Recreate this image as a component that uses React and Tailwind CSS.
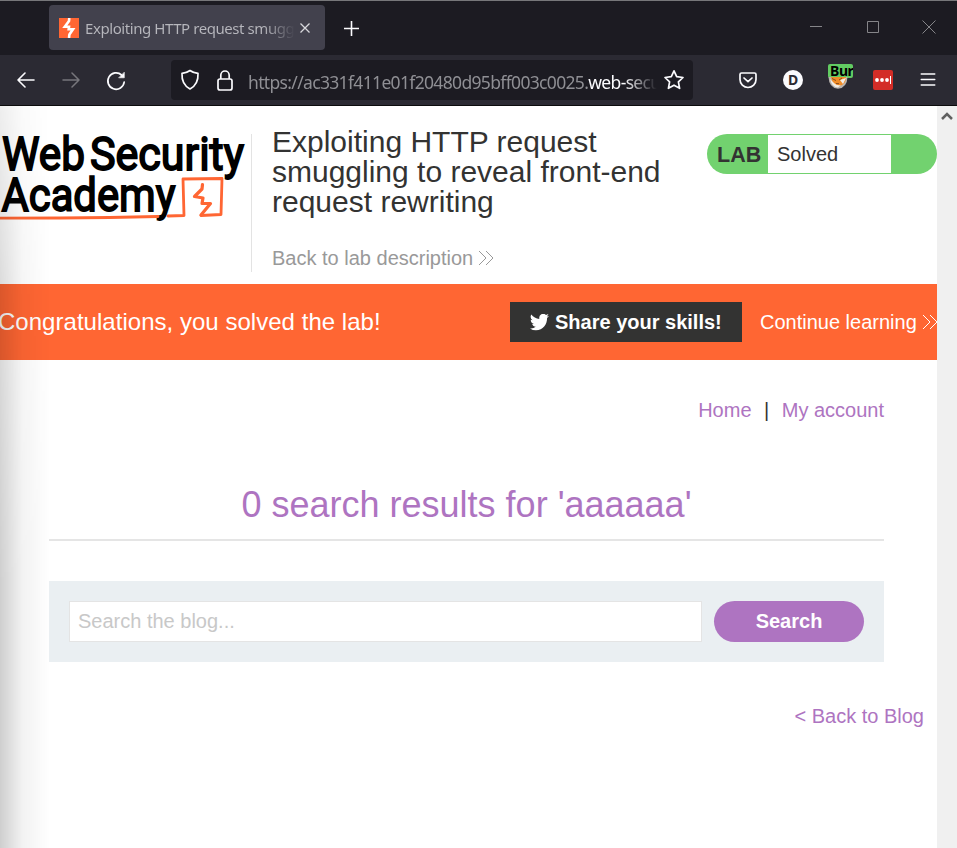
import React from "react";

function Chevrons({ className }) {
  return (
    <svg className={className} width="16" height="16" viewBox="0 0 16 16" fill="none" stroke="currentColor" strokeWidth="1">
      <path d="M1 1l7 7-7 7M8 1l7 7-7 7" />
    </svg>
  );
}

function TabStrip() {
  return (
    <div className="flex h-[55px] shrink-0 items-center border-t border-[#77777a] bg-[#1c1b22] pb-px pl-[49px]">
      <div className="flex h-[45px] w-[276px] items-center rounded bg-[#42414d] pl-[10px]">
        <svg className="shrink-0" width="20" height="20" viewBox="0 0 20 20">
          <rect width="20" height="20" fill="#ff6633" />
          <path d="M10.300 0L10 3L5.800 8.700H10L9.700 11.200H14L10.400 16.500L10 20" fill="none" stroke="#fff" strokeWidth="2.600" />
        </svg>
        <div className="ml-[6px] w-[210px] overflow-hidden whitespace-nowrap bg-linear-to-r from-[#b7b7bd] from-85% to-transparent bg-clip-text pt-[2px] text-[15px] tracking-[-0.43px] text-transparent">
          Exploiting HTTP request smuggling
        </div>
        <svg className="ml-[5px] shrink-0" width="10" height="10" viewBox="0 0 10 10" stroke="#d8d8dc" strokeWidth="1.300">
          <path d="M.5 .5l9 9M9.500 .5l-9 9" />
        </svg>
      </div>
      <svg className="mt-px ml-[19px]" width="15" height="15" viewBox="0 0 15 15" stroke="#fbfbfe" strokeWidth="1.600">
        <path d="M7.500 0v15M0 7.500h15" />
      </svg>
      <div className="ml-auto flex items-center pr-[21px] pb-px">
        <svg width="12" height="14" viewBox="0 0 12 14" stroke="#858589"><path d="M0 6.500h12" /></svg>
        <svg className="ml-[45px]" width="12" height="12" viewBox="0 0 12 12" fill="none" stroke="#858589"><path d="M.5 .5h11v11h-11z" /></svg>
        <svg className="ml-[43px]" width="14" height="14" viewBox="0 0 14 14" stroke="#858589"><path d="M.5 .5l13 13M13.500 .5l-13 13" /></svg>
      </div>
    </div>
  );
}

function Toolbar() {
  return (
    <div className="flex h-[51px] shrink-0 items-center border-b border-[#0c0c0d] bg-[#2b2a33] pl-[17px]">
      <svg width="18" height="16" viewBox="0 0 18 16" fill="none" stroke="#fbfbfe" strokeWidth="1.600" strokeLinecap="round" strokeLinejoin="round"><path d="M17 8H1M8 1L1 8l7 7" /></svg>
      <svg className="ml-[27px]" width="18" height="16" viewBox="0 0 18 16" fill="none" stroke="#77767c" strokeWidth="1.500" strokeLinecap="round" strokeLinejoin="round"><path d="M1 8h16M10 1l7 7-7 7" /></svg>
      <svg className="mt-px ml-[26px]" width="20" height="20" viewBox="0 0 20 20" fill="none" stroke="#fbfbfe" strokeWidth="1.700" strokeLinecap="round">
        <path d="M18.200 11A8.200 8.200 0 1 1 15.600 4" /><path d="M18.300 1.500v5.300h-5.300z" fill="#fbfbfe" strokeWidth=".6" />
      </svg>
      <div className="ml-[45px] flex h-10 w-[522px] items-center rounded bg-[#1c1b22] pl-[9px]">
        <svg className="shrink-0" width="20" height="22" viewBox="0 0 20 22" fill="none" stroke="#fbfbfe" strokeWidth="1.700" strokeLinejoin="round"><path d="M10 1.500c2.500 1.900 5.200 2.600 8 2.900.4 7.200-2.100 12.500-8 15.600C4.100 16.900 1.600 11.600 2 4.400c2.800-.3 5.500-1 8-2.900z" /></svg>
        <svg className="ml-[17px] shrink-0" width="16" height="21" viewBox="0 0 16 21" fill="none" stroke="#fbfbfe" strokeWidth="1.700"><rect x="1" y="9" width="14" height="11" rx="2" /><path d="M3.800 9V5.200a4.200 4.200 0 0 1 8.400 0V9" /></svg>
        <div className="ml-[15px] w-[409px] overflow-hidden mask-r-from-92% mask-r-to-100% pt-[3px] text-[17.500px] leading-6 tracking-[-0.66px] whitespace-nowrap text-[#8f8f94]">
          https://ac331f411e01f20480d95bff003c0025.<span className="text-[#fbfbfe]">web-security-academy.net</span>
        </div>
        <svg className="ml-[6px] shrink-0" width="22" height="22" viewBox="0 0 22 22" fill="none" stroke="#fbfbfe" strokeWidth="1.700" strokeLinejoin="round"><path d="M11 1.800l2.700 5.900 6.300.8-4.600 4.400 1.200 6.400-5.600-3.100-5.600 3.100 1.200-6.400L2 8.500l6.300-.8z" /></svg>
      </div>
      <svg className="ml-[46px]" width="18" height="17" viewBox="0 0 18 17" fill="none" stroke="#fbfbfe" strokeWidth="1.700" strokeLinecap="round" strokeLinejoin="round"><path d="M2.500 1h13a1.500 1.500 0 0 1 1.500 1.500V7.500a8 8 0 0 1-16 0V2.500A1.500 1.500 0 0 1 2.500 1z" /><path d="M5 6l4 3.700L13 6" /></svg>
      <div className="ml-[26px] flex size-5 items-center justify-center rounded-full bg-[#fbfbfe] text-[14px] leading-5 font-bold text-[#2b2a33]">D</div>
      <div className="-mt-[8px] ml-[25px] h-[25px] w-[25px]">
        <div className="h-[14px] w-[25px] overflow-hidden rounded-[2px] bg-[#62cb62] pl-[2px] text-[14px] leading-[13px] font-bold tracking-[-0.4px] text-black">Burp</div>
        <svg className="-mt-px" width="20" height="12" viewBox="0 0 20 12">
          <path d="M.5 0h19Q19 11 10 11.800 1 11 .5 0z" fill="#b9b3ae" />
          <path d="M3 0h15q0 6-4 8-6 3-9-1z" fill="#f08c28" />
          <path d="M2 2l4 4q3 3 7 2l-3 2.500q-6 0-8-8.500zM12 3l6-2-3 6z" fill="#f1ece6" />
          <path d="M4 1.500l4 2M11 3l3-2M8 6.500l3 .2" stroke="#8b4d1b" strokeWidth="1" />
        </svg>
      </div>
      <div className="ml-[20px] flex size-5 items-center justify-center rounded-[2px] bg-[#d32d27]">
        <svg width="16" height="8" viewBox="0 0 16 8"><g fill="#fff"><circle cx="2" cy="4" r="1.900" /><circle cx="7" cy="4" r="1.900" /><circle cx="12" cy="4" r="1.900" /><rect x="15" width="1" height="8" /></g></svg>
      </div>
      <svg className="-mt-px ml-[27px]" width="16" height="13" viewBox="0 0 16 13" stroke="#fbfbfe" strokeWidth="1.400" strokeLinecap="round"><path d="M1.200 1h13.600M1.200 6.500h13.600M1.200 12h13.600" /></svg>
    </div>
  );
}

function Logo() {
  return (
    <svg className="mt-[28px] shrink-0 overflow-visible" width="251" height="90" viewBox="0 0 251 90">
      <g fill="#000" stroke="#000" strokeWidth="1.800" fontFamily="Roboto, sans-serif" fontWeight="400" fontSize="47">
        <text x="2" y="35.500" textLength="83" lengthAdjust="spacingAndGlyphs">Web</text>
        <text x="90" y="35.500" textLength="154" lengthAdjust="spacingAndGlyphs">Security</text>
        <text x="1.500" y="76.500" textLength="174" lengthAdjust="spacingAndGlyphs">Academy</text>
      </g>
      <g fill="none" stroke="#ff6633" strokeLinejoin="round" strokeLinecap="round">
        <path d="M0 84.200L60 84Q110 83.500 158 82.500M168 82L184 81.500L183 45L222 44.500L221 80.500L201 81.500" strokeWidth="2.800" />
        <path d="M202.500 50.500L202 55L194.500 62.500L203 64L202 69.500L210.500 69.500L201 81" strokeWidth="3.200" />
      </g>
    </svg>
  );
}

export default function App() {
  return (
    <div className="flex h-[848px] w-[957px] flex-col overflow-hidden bg-white font-['Noto_Sans',sans-serif]">
      <TabStrip />
      <Toolbar />
      <div className="flex min-h-0 flex-1 font-['Liberation_Sans',Arial,sans-serif] text-[20px] leading-[24px] text-[#333332]">
        <main className="relative flex w-[937px] flex-col overflow-hidden bg-white">
          <header className="flex h-[178px] shrink-0 items-start">
            <Logo />
            <div className="mt-[28px] h-[138px] w-px bg-[#e3e3e3]" />
            <div className="ml-[20px] w-[400px] pt-[21px]">
              <h1 className="text-[30px] leading-[30px]">Exploiting HTTP request smuggling to reveal front-end request rewriting</h1>
              <a className="mt-[29px] flex items-center gap-[5px] text-[#999999]">Back to lab description <Chevrons /></a>
            </div>
            <div className="mt-[28px] ml-auto flex h-10 w-[230px] items-center overflow-hidden rounded-[20px] bg-[#72d26f]">
              <span className="w-[61px] pt-px pl-[10px] text-[21.500px] font-bold">LAB</span>
              <span className="h-[38px] w-[123px] bg-white pl-[9px] leading-[38px]">Solved</span>
            </div>
          </header>
          <section className="flex h-[76px] shrink-0 items-center bg-[#ff6633] text-white">
            <p className="-ml-[2px] text-[24px] tracking-[0.03px]">Congratulations, you solved the lab!</p>
            <a className="ml-auto flex h-10 w-[232px] items-center bg-[#333332] pl-[20px] font-bold">
              <svg className="mr-[6px]" width="19" height="17" viewBox="0 2.500 24 20" preserveAspectRatio="none" fill="#fff"><path d="M23.950 4.570a10 10 0 0 1-2.820.77 4.960 4.960 0 0 0 2.160-2.720c-.95.55-2 .95-3.130 1.180a4.920 4.920 0 0 0-8.380 4.480C7.690 8.100 4.070 6.130 1.640 3.160a4.920 4.920 0 0 0 1.520 6.570 4.900 4.900 0 0 1-2.230-.61v.06a4.920 4.920 0 0 0 3.950 4.830 5 5 0 0 1-2.210.08 4.940 4.940 0 0 0 4.600 3.420A9.870 9.870 0 0 1 0 19.540a13.990 13.990 0 0 0 7.550 2.210c9.050 0 14-7.500 14-13.980 0-.21 0-.42-.02-.63a9.940 9.940 0 0 0 2.420-2.570z" /></svg>
              Share your skills!
            </a>
            <a className="ml-[18px] flex w-[177px] items-center gap-[5px] whitespace-nowrap">Continue learning <Chevrons className="shrink-0" /></a>
          </section>
          <div className="ml-[49px] flex w-[835px] shrink-0 flex-col">
            <nav className="mt-[38px] flex justify-end text-[#ae74c1]"><a>Home</a><span className="mr-[12.500px] ml-[12.500px] text-[#333332]">|</span><a>My account</a></nav>
            <h2 className="mt-[59px] flex h-[60px] justify-center border-b-2 border-[#e5e5e5] pt-[3px] text-[36px] leading-[42px] text-[#ae74c1]">0 search results for 'aaaaaa'</h2>
            <form className="mt-[40px] flex h-[81px] items-center bg-[#eaeff2] px-[20px]">
              <div className="h-[41px] w-[633px] border border-[#e4e4e4] bg-white pl-[8px] leading-[39px] text-[#c8c8c8]">Search the blog...</div>
              <button type="button" className="ml-[12px] h-[41px] w-[150px] rounded-full bg-[#ae74c1] pb-[2px] font-bold text-white">Search</button>
            </form>
          </div>
          <a className="mt-[42px] mr-[13px] self-end text-[#ae74c1]">&lt; Back to Blog</a>
          <div className="pointer-events-none absolute inset-y-0 left-0 w-[50px] bg-linear-to-r from-black/19 via-black/5 via-45% to-transparent mask-[linear-gradient(to_bottom,rgba(0,0,0,0.35),rgba(0,0,0,0.75)_25%,black_65%)]" />
        </main>
        <aside className="flex w-[20px] justify-center bg-[#f0f0f0] pt-[6px]">
          <svg width="12" height="8" viewBox="0 0 12 8" fill="none" stroke="#606060" strokeWidth="2.500"><path d="M1 7l5-5 5 5" /></svg>
        </aside>
      </div>
    </div>
  );
}
